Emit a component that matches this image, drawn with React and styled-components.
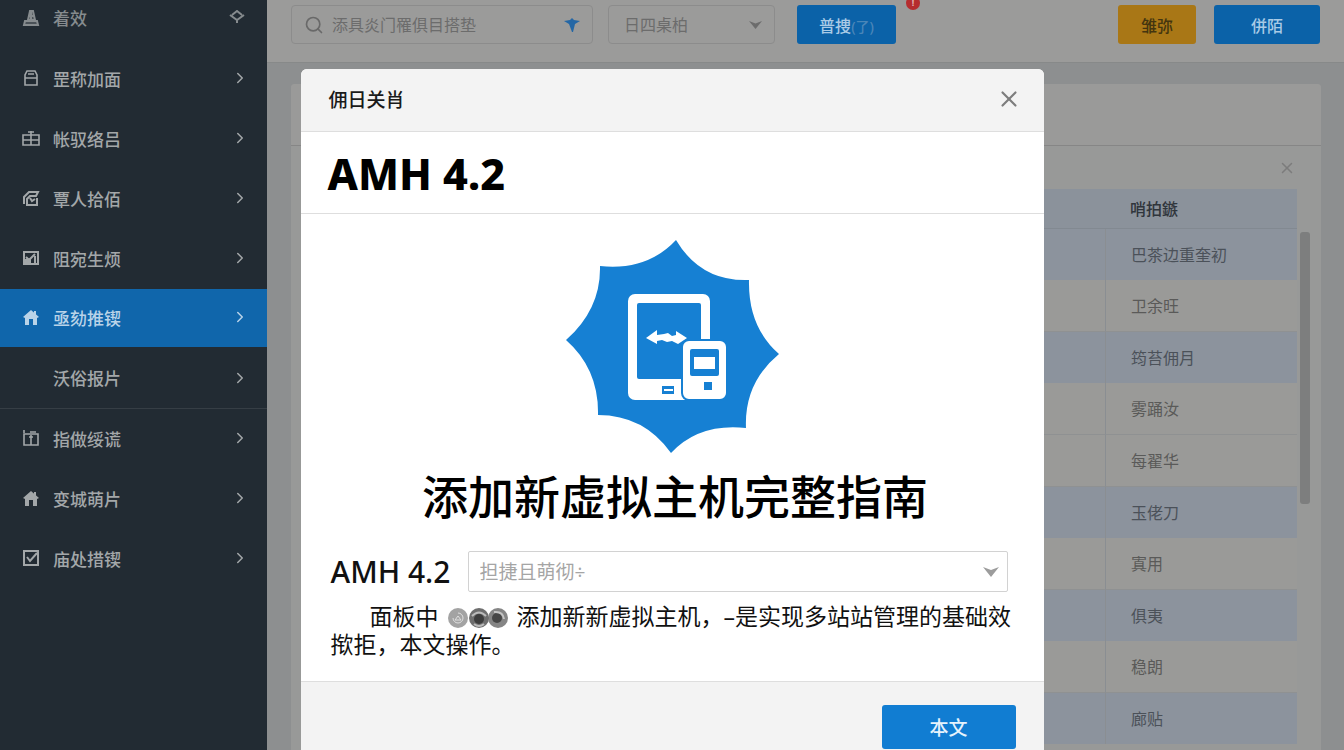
import React from "react"
import styled, { createGlobalStyle } from "styled-components"
import { FiSearch, FiX, FiChevronRight } from "react-icons/fi"

const GlobalStyle = createGlobalStyle`
  * {
    box-sizing: border-box;
  }
  body {
    margin: 0;
    color: #1a1a1a;
    background: #8d8f90;
    font-family: "Noto Sans", "Noto Sans CJK SC", sans-serif;
  }
  button,
  input,
  select {
    font-family: inherit;
  }
  h1,
  h2,
  h3,
  p {
    margin: 0;
  }
`

const Shell = styled.div`
  display: flex;
  height: 100vh;
  overflow: hidden;
`

/* sidebar */

const Sidebar = styled.nav`
  flex: 0 0 267px;
  background: #222b33;
`

const NavLink = styled.a`
  display: flex;
  align-items: center;
  height: ${props => (props.$active ? "58px" : "60px")};
  margin-bottom: ${props => (props.$active ? "2px" : "0")};
  padding: 0 18px 2px 22px;
  color: ${props => (props.$active ? "#b9d3e8" : "#a3a7a9")};
  background: ${props => (props.$active ? "#1066ab" : "transparent")};
  border-bottom: ${props => (props.$divided ? "1px solid #363e45" : "none")};
  font-size: 17px;
  font-weight: 500;
  text-decoration: none;
  > span {
    flex: 1;
  }
`

const NavTop = styled(NavLink)`
  height: 36px;
  margin-bottom: 13px;
  padding-right: 22px;
  color: #868b8e;
`

const NavIcon = styled.svg`
  width: 18px;
  height: 18px;
  margin-right: 13px;
  fill: none;
  stroke: currentColor;
  stroke-width: 2;
`

/* toolbar */

const Main = styled.div`
  flex: 1;
  min-width: 0;
  display: flex;
  flex-direction: column;
`

const Toolbar = styled.header`
  flex: none;
  display: flex;
  align-items: flex-start;
  padding: 5px 24px 18px;
  background: #9b9b9a;
`

const Field = styled.label`
  display: flex;
  align-items: center;
  flex: 0 1 ${props => props.$width};
  height: 39px;
  margin-right: ${props => props.$after};
  padding: 0 12px;
  color: #696969;
  border: 1px solid #8c8c8c;
  border-radius: 4px;
`

const SearchInput = styled.input`
  flex: 1;
  min-width: 0;
  margin-left: 8px;
  padding: 0;
  border: 0;
  outline: 0;
  background: transparent;
  font-size: 16px;
  &::placeholder {
    color: #6c6c6c;
    opacity: 1;
  }
`

const PlainSelect = styled.select`
  flex: 1;
  min-width: 0;
  padding: 0 3px;
  appearance: none;
  border: 0;
  outline: 0;
  background: transparent;
  color: ${props => props.$color};
  font-size: ${props => props.$size};
`

const ToolButton = styled.button`
  position: relative;
  width: ${props => props.$width};
  height: 39px;
  padding: 0;
  border: 0;
  border-radius: 3px;
  color: ${props => (props.$amber ? "#44350f" : "#a9cbe6")};
  background: ${props => (props.$amber ? "#a97716" : "#0b62a8")};
  font-size: 16px;
  font-weight: 500;
  small {
    color: #4a86b8;
    font-size: 14px;
  }
`

const Badge = styled.span`
  position: absolute;
  top: -9px;
  right: -24px;
  width: 14px;
  height: 14px;
  border-radius: 50%;
  background: #b52d2f;
  color: #e3b3b3;
  font-size: 9px;
  font-weight: 700;
  line-height: 14px;
`

const ToolEnd = styled.div`
  display: flex;
  gap: 18px;
  margin-left: auto;
`

/* content card */

const Content = styled.main`
  flex: 1;
  min-height: 0;
  padding: 21px 23px 0 24px;
  border-top: 1px solid #878989;
`

const Card = styled.section`
  background: #989998;
  border-radius: 4px 4px 0 0;
`

const CardHead = styled.div`
  height: 62px;
  border-bottom: 1px solid #868686;
  background: #9a9a99;
  border-radius: 4px 4px 0 0;
`

const CardTools = styled.div`
  display: flex;
  justify-content: flex-end;
  align-items: center;
  height: 43px;
  padding: 0 25px;
`

const IconButton = styled.button`
  display: flex;
  padding: 0;
  border: 0;
  background: transparent;
  color: ${props => props.$color};
`

const TableArea = styled.div`
  display: flex;
  align-items: flex-start;
  gap: 3px;
  padding: 0 11px 40px 22px;
`

const Table = styled.table`
  flex: 1;
  border-collapse: separate;
  border-spacing: 0;
  table-layout: fixed;
  font-size: 16px;
  th,
  td {
    padding: 0 25px 2px;
    text-align: left;
  }
  th {
    height: 40px;
    color: #30353b;
    background: #8b929b;
    border-bottom: 1px solid #828991;
    font-weight: 500;
  }
  td + td {
    border-left: 1px solid #8a8e92;
  }
  th:last-child {
    width: 192px;
  }
`

const Row = styled.tr`
  td {
    height: ${props => (props.$shaded ? "51px" : "52px")};
    color: ${props => (props.$shaded ? "#4b5159" : "#5a5a59")};
    background: ${props => (props.$shaded ? "#8c939d" : "#9a9a98")};
    border-bottom: ${props => (props.$shaded ? "none" : "1px solid #8f9192")};
  }
`

const ScrollThumb = styled.div`
  width: 10px;
  height: 272px;
  margin-top: 43px;
  border-radius: 3px;
  background: #7d7e7e;
`

/* dialog */

const Overlay = styled.div`
  position: absolute;
  inset: 0;
  display: flex;
  justify-content: center;
  align-items: flex-start;
  padding-top: 69px;
  overflow: hidden;
`

const Dialog = styled.div`
  width: 100%;
  max-width: 743px;
  background: #fff;
  border-radius: 6px;
  overflow: hidden;
`

const DialogHead = styled.div`
  display: flex;
  justify-content: space-between;
  align-items: center;
  height: 63px;
  padding: 0 22px 2px 28px;
  background: #f3f3f3;
  border-bottom: 1px solid #dedede;
  h2 {
    font-size: 19px;
    font-weight: 500;
  }
`

const DialogTitle = styled.h1`
  height: 82px;
  padding-left: 27px;
  border-bottom: 1px solid #dedede;
  color: #000;
  font-size: 43px;
  font-weight: 800;
  line-height: 84px;
`

const DialogBody = styled.div`
  padding: 26px 30px 22px;
`

const Emblem = styled.svg`
  display: block;
  width: 213px;
  height: 213px;
  margin: 0 auto;
`

const Headline = styled.h3`
  margin: 9px 0 21px;
  padding-left: 6px;
  color: #000;
  font-size: 46px;
  font-weight: 500;
  line-height: 68px;
  text-align: center;
`

const FormRow = styled.div`
  display: flex;
  align-items: center;
  justify-content: space-between;
  padding-right: 6px;
  label {
    color: #111;
    font-size: 30px;
    font-weight: 500;
    line-height: 41px;
  }
`

const SelectBox = styled.div`
  display: flex;
  align-items: center;
  flex: 0 1 540px;
  height: 41px;
  padding: 0 8px;
  border: 1px solid #d2d2d2;
  border-radius: 2px;
`

const Description = styled.p`
  margin: 10px 0 1px;
  color: #111;
  font-size: 23px;
  line-height: 28px;
  text-indent: 39px;
  white-space: nowrap;
`

const Dots = styled.svg`
  width: 62px;
  height: 22px;
  margin: 0 8px;
  vertical-align: -4px;
`

const DialogFoot = styled.div`
  display: flex;
  justify-content: flex-end;
  padding: 23px 28px;
  background: #f3f3f3;
  border-top: 1px solid #dedede;
`

const PrimaryButton = styled.button`
  width: 134px;
  height: 44px;
  border: 0;
  border-radius: 3px;
  color: #e6f3fc;
  background: #117dd2;
  font-size: 19px;
  font-weight: 500;
`

const icons = {
  tower: (
    <>
      <path d="M2 17h14l-1-4H3zM6 12l2-9h3l2 9z" fill="currentColor" fillOpacity=".4" />
      <path d="M9 4v9M6 8h6" />
    </>
  ),
  jar: <path d="M5 2h8l2 4v10H3V6zM3 9h12M6 5h6" strokeWidth="1.6" />,
  gift: <path d="M1 6h16v10H1zM1 11h16M9 2v14M6 3h6" strokeWidth="1.6" />,
  folder: <path d="M2 15V8l5-5h9l-2 4H8l-3 3v6h10V9M8 9l2 3 3-2" />,
  chart: (
    <>
      <path d="M2 3h14v12H2zM4 8l3 3 6-6M13 7v7M3 14h4" />
      <path d="M2 11h6v4H2z" fill="currentColor" />
    </>
  ),
  home: (
    <>
      <path d="M1 9l8-7 8 7-2 1v7h-4v-6H7v6H3v-7z" fill="currentColor" stroke="none" />
      <path d="M13 3v4" />
    </>
  ),
  box: <path d="M2 5h14v11H2zM9 6v10M2 1v3M8 3h6M7 8h4" strokeWidth="1.6" />,
  check: <path d="M2 2h14v14H2zM5 8l3 4 7-8" />,
}

const links = [
  { text: "罡称加面", icon: "jar" },
  { text: "帐驭络吕", icon: "gift" },
  { text: "覃人拾佰", icon: "folder" },
  { text: "阻宛生烦", icon: "chart" },
  { text: "亟劾推锲", icon: "home", active: true },
  { text: "沃俗报片", divided: true },
  { text: "指做绥谎", icon: "box" },
  { text: "变城萌片", icon: "home" },
  { text: "庙处措锲", icon: "check" },
]

const rows = [
  { text: "巴茶边重奎初", shaded: true },
  { text: "卫余旺" },
  { text: "筠苔佣月", shaded: true },
  { text: "雾踊汝" },
  { text: "每翟华" },
  { text: "玉佬刀", shaded: true },
  { text: "寘用" },
  { text: "俱夷", shaded: true },
  { text: "稳朗" },
  { text: "廊贴", shaded: true },
]

function Caret({ color, width = 16 }) {
  return (
    <svg width={width} height="10" viewBox="0 0 16 10">
      <path d="M0 0l8 3 8-3-8 10z" fill={color} />
    </svg>
  )
}

function EmblemArt() {
  return (
    <Emblem viewBox="15 15 213 213" aria-hidden="true">
      <path
        d="M125 15Q150 57 198 55Q197 102 228 129Q193 158 195 203Q148 198 120 228Q93 190 47 190Q48 144 15 115Q50 84 49 41Q96 46 125 15z"
        fill="#1680d3"
      />
      <rect x="77" y="69" width="82" height="106" rx="7" fill="#fff" />
      <rect x="86" y="78" width="64" height="76" rx="2" fill="#1680d3" />
      <rect x="111" y="161" width="12" height="8" fill="#1680d3" />
      <path d="M113 165h9" stroke="#fff" strokeWidth="2" />
      <path
        d="M95 113l11-8v5l7-1 4-1 4 3 4-1v-4l11 7-9 6-6-3-5 1-5-2-5 1v3z"
        fill="#fff"
      />
      <rect x="131" y="115" width="45" height="60" rx="7" fill="#fff" stroke="#1680d3" strokeWidth="2" />
      <rect x="139" y="124" width="29" height="27" rx="2" fill="#1680d3" />
      <rect x="143" y="132" width="21" height="12" fill="#fff" />
      <rect x="153" y="157" width="8" height="8" fill="#1680d3" />
    </Emblem>
  )
}

function DotGroup() {
  return (
    <Dots viewBox="0 0 62 22" aria-hidden="true">
      <circle cx="11" cy="11" r="10" fill="#a3a3a3" />
      <path d="M6 11a5 5 0 1 0 5-5M8 13l3-4 3 4z" fill="none" stroke="#e0e0e0" />
      <circle cx="51" cy="11" r="10" fill="#858585" />
      <circle cx="32" cy="11" r="10" fill="#6e6e6e" />
      <circle cx="32" cy="12" r="5" fill="#3d3d3d" />
      <path d="M25 9q7-7 14 0M27 17q5 4 10 0" fill="none" stroke="#bbb" strokeWidth="2" />
      <circle cx="50" cy="11" r="5" fill="#464646" />
      <path d="M47 5q9-1 10 7" fill="none" stroke="#c4c4c4" strokeWidth="2" />
    </Dots>
  )
}

function SideNav() {
  return (
    <Sidebar>
      <NavTop href="#">
        <NavIcon>{icons.tower}</NavIcon>
        <span>着效</span>
        <svg width="16" height="14" viewBox="0 0 16 14" fill="none" stroke="currentColor" strokeWidth="2">
          <path d="M3 5l5-4 5 4M1 5l7 5 7-5M8 10v3" />
        </svg>
      </NavTop>
      {links.map(link => (
        <NavLink key={link.text} href="#" $active={link.active} $divided={link.divided}>
          <NavIcon>{icons[link.icon]}</NavIcon>
          <span>{link.text}</span>
          <FiChevronRight size={18} />
        </NavLink>
      ))}
    </Sidebar>
  )
}

export default function App() {
  return (
    <>
      <GlobalStyle />
      <Shell>
        <SideNav />
        <Main>
          <Toolbar>
            <Field $width="302px" $after="15px">
              <FiSearch size={20} />
              <SearchInput type="text" placeholder="添具炎门罹俱目搭垫" />
              <svg width="16" height="14" viewBox="0 0 16 14">
                <path d="M0 3l6-1 2-2 2 2 6 1-5 3-2 8H8L5 6z" fill="#2467a5" />
              </svg>
            </Field>
            <Field $width="167px" $after="22px">
              <PlainSelect $color="#6c6c6c" $size="16px" aria-label="日四桌柏">
                <option>日四桌柏</option>
              </PlainSelect>
              <Caret color="#6c6c6c" width={13} />
            </Field>
            <ToolButton $width="99px">
              普捜<small>(了)</small>
              <Badge>!</Badge>
            </ToolButton>
            <ToolEnd>
              <ToolButton $width="78px" $amber>
                雏弥
              </ToolButton>
              <ToolButton $width="106px">併陌</ToolButton>
            </ToolEnd>
          </Toolbar>
          <Content>
            <Card>
              <CardHead />
              <CardTools>
                <IconButton $color="#7c7c7c" aria-label="关闭">
                  <FiX size={18} />
                </IconButton>
              </CardTools>
              <TableArea>
                <Table>
                  <thead>
                    <tr>
                      <th />
                      <th>哨拍鏃</th>
                    </tr>
                  </thead>
                  <tbody>
                    {rows.map(row => (
                      <Row key={row.text} $shaded={row.shaded}>
                        <td />
                        <td>{row.text}</td>
                      </Row>
                    ))}
                  </tbody>
                </Table>
                <ScrollThumb />
              </TableArea>
            </Card>
          </Content>
        </Main>
      </Shell>
      <Overlay>
        <Dialog role="dialog" aria-labelledby="dialog-name">
          <DialogHead>
            <h2 id="dialog-name">佣日关肖</h2>
            <IconButton $color="#7d7d7d" aria-label="关闭">
              <FiX size={26} strokeWidth={2} />
            </IconButton>
          </DialogHead>
          <DialogTitle>AMH 4.2</DialogTitle>
          <DialogBody>
            <EmblemArt />
            <Headline>添加新虚拟主机完整指南</Headline>
            <FormRow>
              <label htmlFor="host">AMH 4.2</label>
              <SelectBox>
                <PlainSelect id="host" $color="#a5a5a5" $size="19px">
                  <option>担捷且萌彻÷</option>
                </PlainSelect>
                <Caret color="#9c9c9c" />
              </SelectBox>
            </FormRow>
            <Description>
              面板中
              <DotGroup />
              添加新新虚拟主机，–是实现多站站管理的基础效
              <br />
              揿拒，本文操作。
            </Description>
          </DialogBody>
          <DialogFoot>
            <PrimaryButton>本文</PrimaryButton>
          </DialogFoot>
        </Dialog>
      </Overlay>
    </>
  )
}
